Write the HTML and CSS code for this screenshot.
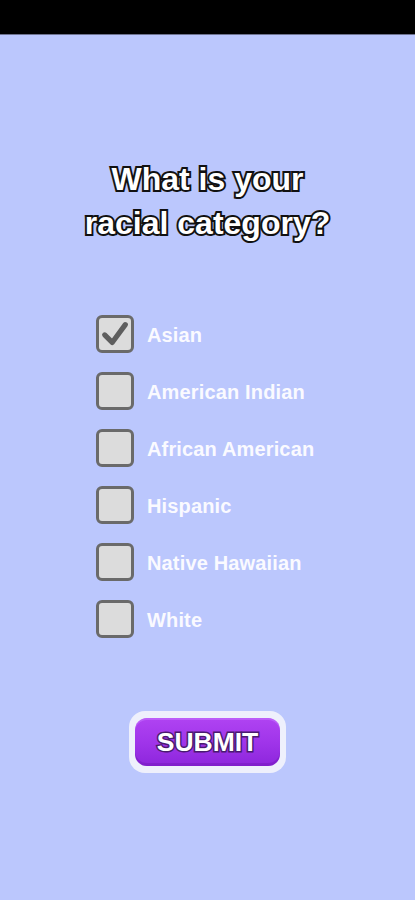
FILE: index.html
```html
<!DOCTYPE html>
<html>
<head>
<meta charset="utf-8">
<link rel="stylesheet" href="styles.css">
</head>
<body>
<div class="statusbar"></div>
<main class="screen">
  <h1 class="title">What is your<br>racial category?</h1>
  <ul class="options">
    <li class="option"><span class="box checked"><svg viewBox="0 0 32 32" width="32" height="32"><path d="M5 17 L13 25 L27 6" fill="none" stroke="#5e5e5e" stroke-width="5.5" stroke-linecap="round" stroke-linejoin="round"/></svg></span><span class="label">Asian</span></li>
    <li class="option"><span class="box"></span><span class="label">American Indian</span></li>
    <li class="option"><span class="box"></span><span class="label">African American</span></li>
    <li class="option"><span class="box"></span><span class="label">Hispanic</span></li>
    <li class="option"><span class="box"></span><span class="label">Native Hawaiian</span></li>
    <li class="option"><span class="box"></span><span class="label">White</span></li>
  </ul>
  <div class="submit-wrap">
    <button class="submit">SUBMIT</button>
  </div>
</main>
</body>
</html>
```
FILE: styles.css
```css
html, body {
  margin: 0;
  padding: 0;
  background: #bbc7fd;
  font-family: "Liberation Sans", Arial, sans-serif;
}
.statusbar {
  height: 34px;
  background: #000;
  border-bottom: 1px solid #6e7390;
}
.screen {
  display: flex;
  flex-direction: column;
  align-items: center;
}
.title {
  margin: 122px 0 0;
  font-size: 32px;
  line-height: 44px;
  font-weight: 700;
  text-align: center;
  color: #fff;
  -webkit-text-stroke: 4px #111;
  paint-order: stroke fill;
}
.options {
  list-style: none;
  margin: 70px 0 0;
  padding: 0 0 0 96px;
  align-self: stretch;
  display: flex;
  flex-direction: column;
  gap: 19px;
}
.option {
  display: flex;
  align-items: center;
  height: 38px;
}
.box {
  box-sizing: border-box;
  width: 38px;
  height: 38px;
  border: 3px solid #6a6a6a;
  border-radius: 6px;
  background: #dcdcdc;
  display: flex;
  align-items: center;
  justify-content: center;
}
.box svg {
  width: 30px;
  height: 30px;
}
.label {
  margin-left: 13px;
  padding-top: 2px;
  font-size: 20px;
  font-weight: 700;
  letter-spacing: 0.15px;
  color: #fafaff;
}
.submit-wrap {
  margin-top: 73px;
  padding: 7px 6px;
  background: #eef0fc;
  border-radius: 16px;
}
.submit {
  display: block;
  width: 145px;
  height: 48px;
  border: none;
  border-radius: 12px;
  background: linear-gradient(180deg, #b043f2 0%, #a035ea 50%, #8d26dc 100%);
  box-shadow: inset 0 -3px 0 rgba(110, 20, 180, 0.4), inset 0 2px 0 rgba(200, 120, 255, 0.5);
  font-family: "Liberation Sans", Arial, sans-serif;
  font-size: 26.5px;
  font-weight: 700;
  color: #fff;
  -webkit-text-stroke: 3px #4a1a70;
  paint-order: stroke fill;
  padding: 0;
}
```
